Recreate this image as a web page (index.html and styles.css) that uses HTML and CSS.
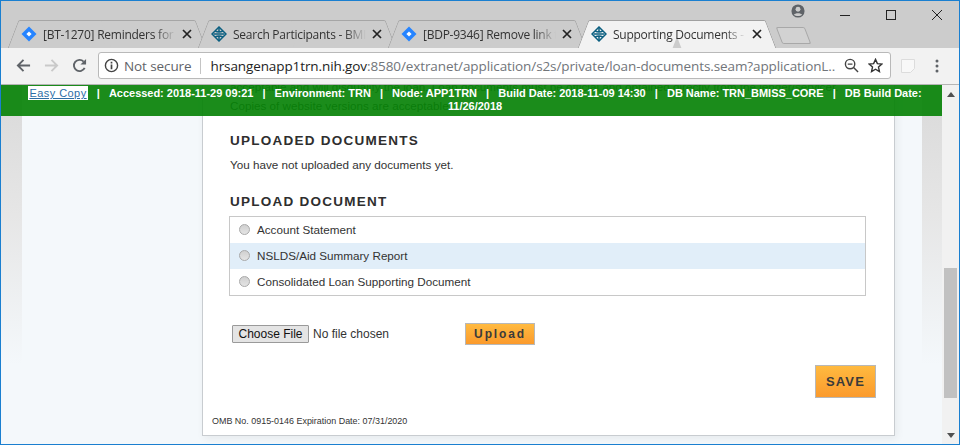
FILE: index.html
```html
<!DOCTYPE html>
<html lang="en">
<head>
<meta charset="utf-8">
<title>Supporting Documents</title>
<link rel="stylesheet" href="styles.css">
</head>
<body>
<svg class="defs" width="0" height="0" aria-hidden="true">
  <defs>
    <symbol id="jira" viewBox="0 0 16 16"><path d="M8 .5 15.500 8 8 15.500 .5 8z" fill="#2684ff"/><path d="M8 5.400 10.600 8 8 10.600 5.400 8z" fill="#fff"/></symbol>
    <symbol id="hrsa" viewBox="0 0 16 16"><g fill="none" stroke="#0b5f80" stroke-width="1.500"><path d="M8 1 15 8 8 15 1 8z"/><path d="M4 4.800C7 6.500 9 6.500 12 4.800M2.500 8h11M4 11.200C7 9.500 9 9.500 12 11.200M8 1v5M8 10v5"/></g></symbol>
    <symbol id="x" viewBox="0 0 10 10"><path d="M1 1 9 9M9 1 1 9" fill="none" stroke="#222" stroke-width="1.700"/></symbol>
  </defs>
</svg>
<div class="window">
  <header class="titlebar">
    <div class="tabs">
      <div class="tab"><svg class="favicon"><use href="#jira"/></svg><span class="tab-title">[BT-1270] Reminders for applicants</span><svg class="tab-close"><use href="#x"/></svg></div>
      <div class="tab"><svg class="favicon"><use href="#hrsa"/></svg><span class="tab-title">Search Participants - BMISS</span><svg class="tab-close"><use href="#x"/></svg></div>
      <div class="tab"><svg class="favicon"><use href="#jira"/></svg><span class="tab-title">[BDP-9346] Remove link to</span><svg class="tab-close"><use href="#x"/></svg></div>
      <div class="tab tab-active"><svg class="favicon"><use href="#hrsa"/></svg><span class="tab-title">Supporting Documents - BMISS</span><svg class="tab-close"><use href="#x"/></svg></div>
    </div>
    <span class="new-tab"></span>
    <div class="window-controls">
      <svg class="profile" viewBox="0 0 16 16"><circle cx="8" cy="8" r="7.500" fill="#5f6368"/><circle cx="8" cy="6" r="2.800" fill="#ccc"/><path d="M3.400 12.200C4.500 9.900 11.500 9.900 12.600 12.200 11 14.200 5 14.200 3.400 12.200z" fill="#ccc"/></svg>
      <svg class="win-btn" viewBox="0 0 10 10"><path d="M0 5.500H10" stroke="#222" stroke-width="1"/></svg>
      <svg class="win-btn" viewBox="0 0 10 10"><rect x=".5" y=".5" width="9" height="9" fill="none" stroke="#222"/></svg>
      <svg class="win-btn" viewBox="0 0 10 10"><path d="M0 0 10 10M10 0 0 10" stroke="#222" stroke-width="1"/></svg>
    </div>
  </header>
  <nav class="toolbar">
    <svg class="nav-icon" viewBox="0 0 16 16"><path d="M15 8H2M8 2 2 8l6 6" fill="none" stroke="#5f6368" stroke-width="2"/></svg>
    <svg class="nav-icon" viewBox="0 0 16 16"><path d="M1 8h13M8 2l6 6-6 6" fill="none" stroke="#c9c9c9" stroke-width="2"/></svg>
    <svg class="nav-icon" viewBox="0 0 16 16"><path d="M13.500 10.500A6 6 0 1 1 12.400 3.800" fill="none" stroke="#5f6368" stroke-width="2"/><path d="M15 1v6H9z" fill="#5f6368"/></svg>
    <div class="omnibox">
      <svg class="info" viewBox="0 0 16 16"><circle cx="8" cy="8" r="6.500" fill="none" stroke="#444" stroke-width="1.500"/><path d="M8 7v5M8 4v1.800" stroke="#444" stroke-width="1.800"/></svg>
      <span class="secure">Not secure</span>
      <span class="url"><span class="host">hrsangenapp1trn.nih.gov</span>:8580/extranet/application/s2s/private/loan-documents.seam?applicationL...</span>
      <svg class="omni-icon" viewBox="0 0 16 16"><circle cx="6.500" cy="6.500" r="5" fill="none" stroke="#444" stroke-width="1.500"/><path d="M10.200 10.200 15 15M4 6.500h5" stroke="#444" stroke-width="1.500"/></svg>
      <svg class="omni-icon" viewBox="0 0 16 16"><path d="M8 1.500 10 6l4.800.5-3.600 3.200 1 4.800L8 12l-4.200 2.500 1-4.800L1.200 6.500 6 6z" fill="none" stroke="#333" stroke-width="1.500"/></svg>
    </div>
    <svg class="extension" viewBox="0 0 16 16"><path d="M1.500 1.500h13v9l-4 4h-9z" fill="#f8f8f8" stroke="#dcdcdc"/></svg>
    <svg class="menu" viewBox="0 0 4 14"><circle cx="2" cy="2" r="1.500" fill="#5f6368"/><circle cx="2" cy="7" r="1.500" fill="#5f6368"/><circle cx="2" cy="12" r="1.500" fill="#5f6368"/></svg>
  </nav>
  <div class="browser-page">
    <div class="viewport">
      <div class="env-bar"><a class="easy-copy" href="#">Easy Copy</a>&nbsp;&nbsp; | &nbsp;&nbsp;Accessed: 2018-11-29 09:21&nbsp;&nbsp; | &nbsp;&nbsp;Environment: TRN&nbsp;&nbsp; | &nbsp;&nbsp;Node: APP1TRN&nbsp;&nbsp; | &nbsp;&nbsp;Build Date: 2018-11-09 14:30&nbsp;&nbsp; | &nbsp;&nbsp;DB Name: TRN_BMISS_CORE&nbsp;&nbsp; | &nbsp;&nbsp;DB Build Date: 11/26/2018</div>
      <div class="band"></div>
      <main class="gutter">
        <section class="card">
          <p class="note">acceptable and will disqualify the loan. Loan documents must be official and obtained directly from the lender/servicer.</p>
          <p class="note">Copies of website versions are acceptable.</p>
          <h2 class="heading heading-first">UPLOADED DOCUMENTS</h2>
          <p class="empty">You have not uploaded any documents yet.</p>
          <h2 class="heading heading-second">UPLOAD DOCUMENT</h2>
          <div class="doc-list">
            <label class="doc-row"><input class="radio" type="radio" name="doc">Account Statement</label>
            <label class="doc-row doc-row-alt"><input class="radio" type="radio" name="doc">NSLDS/Aid Summary Report</label>
            <label class="doc-row"><input class="radio" type="radio" name="doc">Consolidated Loan Supporting Document</label>
          </div>
          <div class="upload-row">
            <input class="file" type="file">
            <button class="btn btn-upload" type="button">Upload</button>
          </div>
          <div class="save-row"><button class="btn btn-save" type="button">SAVE</button></div>
          <p class="omb">OMB No. 0915-0146 Expiration Date: 07/31/2020</p>
        </section>
      </main>
      <div class="band"></div>
    </div>
    <div class="scrollbar">
      <span class="arrow arrow-up"></span>
      <span class="thumb"></span>
      <span class="arrow arrow-down"></span>
    </div>
  </div>
</div>
</body>
</html>
```
FILE: styles.css
```css
* { box-sizing: border-box; }
html, body { margin: 0; padding: 0; overflow: hidden; }
body { width: 960px; height: 445px; font-family: "Liberation Sans", Arial, sans-serif; }
.defs { position: absolute; }
.window {
  width: 960px; height: 445px; display: flex; flex-direction: column;
  border: 1px solid #1a7fd0; overflow: hidden; background: #ccc;
}
.titlebar { height: 47px; flex: none; display: flex; background: #cccccc; position: relative; }
.tabs { display: flex; align-self: flex-end; gap: 3px; padding-left: 12px; height: 28px; }
.tab {
  position: relative; width: 187px; height: 28px; display: flex; align-items: center;
  padding: 0 8px 0 8px; font: 12px "Open Sans", sans-serif; color: #333; z-index: 0;
}
.tab::before, .tab::after {
  content: ""; position: absolute; top: 0; bottom: 0; width: 50%; z-index: -1;
  border-top: 1px solid #a6a6a6; background: #cccccc;
}
.tab::before { left: 0; border-left: 1px solid #a6a6a6; transform: skewX(-21deg); border-radius: 2px 0 0 0; }
.tab::after { right: 0; border-right: 1px solid #a6a6a6; transform: skewX(21deg); border-radius: 0 2px 0 0; }
.tab-active { z-index: 1; }
.tab-active::before, .tab-active::after { background: #f2f2f2; border-color: #a0a0a0; }
.favicon { width: 16px; height: 16px; flex: none; }
.tab-title {
  flex: 1; margin: 0 6px 0 6px; white-space: nowrap; overflow: hidden; letter-spacing: -.25px;
  -webkit-mask-image: linear-gradient(90deg, #000 84%, transparent 100%);
  mask-image: linear-gradient(90deg, #000 84%, transparent 100%);
}
.tab-close { width: 10px; height: 10px; flex: none; }
.new-tab {
  align-self: flex-end; width: 29px; height: 17px; margin: 0 -30px 4px 9px; flex: none;
  border: 1px solid #a8a8a8; border-radius: 2px; background: #d2d2d2; transform: skewX(21deg);
}
.window-controls { display: flex; align-items: flex-start; margin-left: auto; padding-right: 17px; }
.profile { width: 14px; height: 14px; margin: 3px 35px 0 0; flex: none; }
.win-btn { width: 10px; height: 10px; margin: 9px 0 0 36px; flex: none; }
.window-controls .profile + .win-btn { margin-left: 0; }

.toolbar {
  height: 37px; flex: none; display: flex; align-items: center; background: #f2f2f2;
  border-bottom: 1px solid #b5b5b5; padding: 0 0 1px 15px;
}
.nav-icon { width: 15px; height: 15px; margin-right: 13px; flex: none; }
.omnibox {
  width: 793px; height: 27px; margin-left: -2px; display: flex; align-items: center; background: #fff;
  border: 1px solid #b9b9b9; border-radius: 3px; padding: 0 7px 0 5px;
  font: 13.500px "Open Sans", sans-serif; white-space: nowrap;
}
.info { width: 15px; height: 15px; flex: none; }
.secure { margin-left: 5px; padding-right: 9px; margin-right: 9px; border-right: 1px solid #c4c4c4; color: #5f6368; line-height: 16px; letter-spacing: -.1px; }
.url { flex: 1; color: #71757a; overflow: hidden; letter-spacing: -.1px; }
.host { color: #222; }
.omni-icon { width: 15px; height: 15px; flex: none; margin-left: 9px; }
.extension { width: 16px; height: 16px; margin-left: 9px; flex: none; }
.menu { width: 4px; height: 14px; margin-left: 19px; flex: none; }

.browser-page { flex: 1; min-height: 0; display: flex; background: #f4f8fb; }
.viewport { flex: 1; position: relative; overflow: hidden; display: flex; align-items: flex-end; padding-bottom: 8px; }
.env-bar {
  position: absolute; top: 0; left: 0; right: 0; z-index: 2; height: 31px; padding: 2px 5px 0 12px;
  background: rgba(8, 130, 8, .92); color: #fff; font-size: 11px; font-weight: bold; line-height: 12px; text-align: center; letter-spacing: -.02px;
}
.easy-copy { background: #fff; color: #2d6ea6; font-weight: normal; letter-spacing: .45px; padding: 1px 1px; line-height: 13px; }
.band { width: 21px; flex: none; align-self: stretch; margin-bottom: -8px; background: linear-gradient(#dcdcdc 30px, #e6e6e6 130px, #f4f8fb 280px); }
.band:last-child { width: 20px; }
.gutter { flex: 1; padding-left: 180px; padding-right: 27px; }
.card {
  background: #fff; border: 1px solid #c8ccd0; padding: 0 28px 0 27px; color: #333;
  box-shadow: 2px 3px 8px rgba(0, 0, 0, .06); height: 450px; width: 693px; border-width: 0 1.500px 1.500px 1.500px;
  display: flex; flex-direction: column; justify-content: flex-end;
}
.note { margin: 0; font-size: 11.680px; line-height: 19px; color: #333; }
.heading { margin: 0; font-size: 13.500px; line-height: 16px; font-weight: bold; letter-spacing: 1.250px; color: #2e2e2e; }
.heading-first { margin-top: 18px; }
.empty { margin: 9px 0 0; font-size: 11.680px; line-height: 14px; color: #333; }
.heading-second { margin-top: 22px; }
.doc-list { border: 1px solid #c8c8c8; margin: 6px 0 0 -1px; width: 637px; }
.doc-row { height: 26px; display: flex; align-items: center; font-size: 11.680px; color: #333; padding: 0 0 2px 9px; }
.doc-row-alt { background: #e1eef9; }
.radio {
  appearance: none; -webkit-appearance: none; width: 11px; height: 11px; margin: 1px 7px 0 0; border-radius: 50%;
  border: 1px solid #a9a9a9; background: linear-gradient(#d0d0d0, #e4e4e4);
}
.upload-row { display: flex; align-items: center; margin-top: 27px; }
.file { width: 233px; margin-left: 2px; font: 12px "Liberation Sans", Arial, sans-serif; color: #333; flex: none; }
.file::file-selector-button {
  font: 12px "Liberation Sans", Arial, sans-serif; color: #111; height: 18px; width: 77px; padding: 0; margin-right: 4px;
  background: #e4e4e4; border: 1px solid #9a9a9a; border-radius: 1px;
}
.btn {
  background: linear-gradient(#ffba40, #fb9a2c); border: 1px solid #b8b8b8; color: #3a3a3a; font-family: "Liberation Sans", Arial, sans-serif;
  font-weight: bold; padding: 0;
}
.btn-upload { width: 70px; height: 22px; font-size: 12px; letter-spacing: 1.850px; }
.save-row { display: flex; justify-content: flex-end; margin: 20px -10px 0 0; }
.btn-save { width: 61px; height: 33px; font-size: 13px; letter-spacing: 1.100px; }
.omb { margin: 17px 0 8px -18px; font-size: 8.950px; line-height: 12px; color: #333; }

.scrollbar { width: 17px; flex: none; background: #f1f1f1; display: flex; flex-direction: column; align-items: center; padding: 7px 0 6px; }
.arrow { width: 0; height: 0; border: 4px solid transparent; flex: none; }
.arrow-up { border-top: 0; border-bottom: 5px solid #505050; }
.arrow-down { border-bottom: 0; border-top: 5px solid #505050; }
.thumb { width: 13px; height: 130px; background: #c1c1c1; margin-top: auto; margin-bottom: 35px; }
```
